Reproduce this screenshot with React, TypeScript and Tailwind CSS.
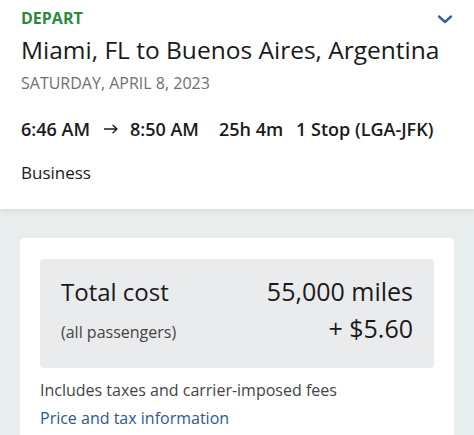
import React from "react";

export default function App() {
  return (
    <div className="w-[474px] h-[435px] overflow-hidden bg-[#e8eded]" style={{ fontFamily: '"Open Sans", "Noto Sans", sans-serif' }}>
      <div className="bg-white px-[21px] pt-[6px] h-[209px] shadow-[0_2px_6px_rgba(0,0,0,0.08)] relative">
        <div className="flex items-center justify-between">
          <div className="text-[16px] font-bold text-[#2a8a3a] leading-[24px]">DEPART</div>
          <svg width="16" height="10" viewBox="0 0 16 10" className="mt-[2px]">
            <path d="M2 2.5 L8 8 L14 2.5" fill="none" stroke="#36609a" strokeWidth="2.4" strokeLinecap="round" strokeLinejoin="round" />
          </svg>
        </div>
        <div className="text-[24.5px] text-[#1a1a1a] leading-[34px] mt-[3px] whitespace-nowrap">Miami, FL to Buenos Aires, Argentina</div>
        <div className="text-[16px] text-[#707070] leading-[22px] mt-[5px]">SATURDAY, APRIL 8, 2023</div>
        <div className="flex items-center text-[18px] font-semibold text-[#1a1a1a] leading-[26px] mt-[22px] whitespace-nowrap">
          <span>6:46 AM</span>
          <svg width="14" height="10" viewBox="0 0 14 10" className="ml-[14px] mr-[12px]">
            <path d="M0.5 5 H13 M9 1.2 L13 5 L9 8.8" fill="none" stroke="#1a1a1a" strokeWidth="1.3" strokeLinecap="round" strokeLinejoin="round" />
          </svg>
          <span>8:50 AM</span>
          <span className="ml-[20px]">25h 4m</span>
          <span className="ml-[13px]">1 Stop (LGA-JFK)</span>
        </div>
        <div className="text-[17px] text-[#1a1a1a] leading-[26px] mt-[18px]">Business</div>
      </div>
      <div className="mx-[20px] mt-[29px] bg-white rounded-t-[4px] px-[20px] pt-[21px] pb-[20px]">
        <div className="bg-[#eaebec] rounded-[4px] px-[21px] pt-[14px] pb-[18px]">
          <div className="flex justify-between items-baseline text-[#1a1a1a] leading-[36px]">
            <span className="text-[24px]">Total cost</span>
            <span className="text-[25px]">55,000 miles</span>
          </div>
          <div className="flex justify-between items-baseline leading-[36px]">
            <span className="text-[16px] text-[#444]">(all passengers)</span>
            <span className="text-[25px] text-[#1a1a1a]">+ $5.60</span>
          </div>
        </div>
        <div className="text-[16px] text-[#444] leading-[24px] mt-[10px]">Includes taxes and carrier-imposed fees</div>
        <div className="text-[16px] text-[#2a5a95] leading-[24px] mt-[4px]">Price and tax information</div>
      </div>
    </div>
  );
}
